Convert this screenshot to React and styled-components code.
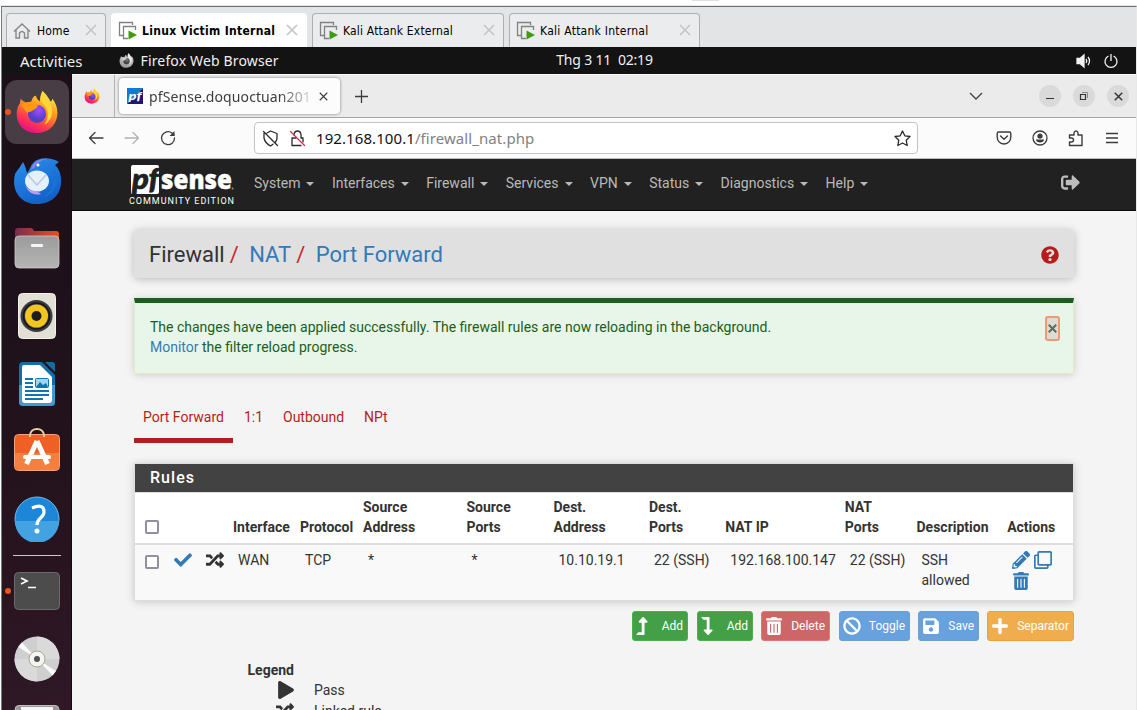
import React from "react";
import styled, { createGlobalStyle } from "styled-components";
import {
  FaCheck, FaRandom, FaPencilAlt, FaRegClone, FaTrashAlt, FaLevelUpAlt, FaLevelDownAlt,
  FaBan, FaSave, FaPlus, FaPlay, FaQuestionCircle, FaSignOutAlt,
} from "react-icons/fa";

const Global = createGlobalStyle`
  *, *::before, *::after { box-sizing: border-box; }
  html, body { margin: 0; padding: 0; overflow: hidden; background: #fff; }
  svg { display: block; flex: none; }
`;

const Screen = styled.div`
  width: 1137px;
  height: 710px;
  overflow: hidden;
  display: flex;
  flex-direction: column;
  background: #fff;
  font-family: Roboto, sans-serif;
`;
const HostStrip = styled.div`
  height: 6px;
  flex: none;
  padding-left: 692px;
  border-bottom: 1px solid #e6e6e6;
`;
const HostMark = styled.div`
  width: 27px;
  height: 1px;
  background: #e0e0e0;
`;
const VmWindow = styled.div`
  flex: 1;
  min-height: 0;
  display: flex;
  flex-direction: column;
  margin-left: 1px;
  border-left: 1px solid #777c7c;
  border-top: 1px solid #696d6d;
  border-right: 1px solid #e8e8e8;
`;
const VmTabs = styled.div`
  height: 40px;
  flex: none;
  display: flex;
  align-items: flex-end;
  gap: 5px;
  padding-left: 4px;
  background: #e3e4e6;
`;
const VmTab = styled.div`
  width: ${(p) => p.$w}px;
  height: 34px;
  display: flex;
  align-items: center;
  padding: 0 8px 0 ${(p) => p.$pl || 6}px;
  gap: ${(p) => p.$gap || 4}px;
  border: 1px solid ${(p) => (p.$active ? "#fff" : "#adafb1")};
  border-bottom: 0;
  border-radius: 4px 4px 0 0;
  background: ${(p) => (p.$active ? "#fff" : "#ebeced")};
  font: ${(p) => (p.$active ? 700 : 400)} 12px "DejaVu Sans Condensed", "DejaVu Sans", sans-serif;
  font-stretch: condensed;
  letter-spacing: ${(p) => p.$ls || 0}px;
  color: #000;
  white-space: nowrap;
`;
const VmClose = styled.div`
  margin-left: auto;
  padding-bottom: 2px;
`;

const GnomeBar = styled.div`
  height: 27px;
  flex: none;
  display: grid;
  grid-template-columns: 1fr auto 1fr;
  align-items: center;
  padding: 0 17px 0 18px;
  background: #131313;
  color: #f0f0f0;
  font: 400 14px "Noto Sans", sans-serif;
  white-space: pre;
`;
const GnomeGroup = styled.div`
  display: flex;
  align-items: center;
  justify-content: ${(p) => (p.$end ? "flex-end" : "flex-start")};
`;
const Label = styled.span`
  font-size: ${(p) => p.$size || 14}px;
  line-height: 20px;
  letter-spacing: ${(p) => p.$ls || 0}px;
  white-space: pre;
`;
const AppName = styled(Label)`
  margin-left: 7px;
`;
const Clock = styled(Label)`
  padding: 0 0 2px 70px;
`;
const AppIcon = styled.div`
  margin-left: 36px;
`;

const Desktop = styled.div`
  flex: 1;
  min-height: 0;
  display: flex;
`;
const Dock = styled.div`
  width: 70px;
  flex: none;
  overflow: hidden;
  background: linear-gradient(165deg, #1b0f18 0%, #21121c 55%, #28141f 75%, #301827 100%);
  border-right: 1px solid #120a10;
  padding-top: 6px;
`;
const DockItem = styled.div`
  position: relative;
  width: 64px;
  height: ${(p) => p.$h || 64}px;
  margin-left: 3px;
  margin-bottom: ${(p) => p.$mb || 4}px;
  border-radius: 12px;
  background: ${(p) => (p.$active ? "#483c45" : "transparent")};
  display: flex;
  align-items: center;
  justify-content: center;
`;
const RunDot = styled.div`
  position: absolute;
  left: 0;
  top: 29px;
  width: 6px;
  height: 6px;
  border-radius: 50%;
  background: #e95420;
`;
const DockLine = styled.div`
  width: 48px;
  height: 1px;
  margin: 0 0 3px 11px;
  background: #cbc6ca;
`;

const Browser = styled.div`
  flex: 1;
  min-width: 0;
  display: flex;
  flex-direction: column;
  background: #f4f4f4;
`;
const TabStrip = styled.div`
  height: 44px;
  flex: none;
  display: flex;
  border-top: 1px solid #fafafa;
  border-bottom: 1px solid #a4a4a4;
  background: #ebebeb;
`;
const PinnedTab = styled.div`
  width: 43px;
  display: flex;
  align-items: center;
  padding-left: 12px;
  border-right: 1px solid #b0b0b0;
`;
const PageTab = styled.div`
  width: 221px;
  height: 36px;
  margin: 3px 0 0 4px;
  display: flex;
  align-items: center;
  padding: 0 11px 0 8px;
  border-radius: 4px;
  background: #fcfcfc;
  box-shadow: 0 0 3px rgba(0, 0, 0, 0.5);
  font: 400 14px "Noto Sans", sans-serif;
  color: #3c3c3c;
`;
const PageTitle = styled.div`
  width: 167px;
  margin: 0 3px 0 6px;
  white-space: nowrap;
  letter-spacing: 0.1px;
  mask-image: linear-gradient(to right, #000 130px, transparent 167px);
`;
const NewTab = styled.div`
  display: flex;
  align-items: center;
  margin-left: 15px;
`;
const StripEnd = styled.div`
  margin-left: auto;
  display: flex;
  align-items: center;
  padding-right: 7px;
`;
const WinButton = styled.div`
  width: 22px;
  height: 22px;
  margin-left: 12px;
  border-radius: 50%;
  background: #dadada;
  display: flex;
  align-items: center;
  justify-content: center;
`;
const WinButtons = styled.div`
  display: flex;
  margin-left: 44px;
`;
const Toolbar = styled.div`
  height: 41px;
  flex: none;
  display: flex;
  align-items: center;
  border-bottom: 1px solid #bcbcbc;
  background: #fbfbfb;
  padding: 0 17px 0 16px;
`;
const NavIcons = styled.div`
  display: flex;
  gap: 20px;
  width: 166px;
`;
const UrlBar = styled.div`
  width: 664px;
  height: 32px;
  display: flex;
  align-items: center;
  padding: 0 6px 0 7px;
  border: 1px solid #c3c3c3;
  border-radius: 4px;
  background: #fff;
  font: 400 14px "Noto Sans", sans-serif;
  color: #111;
  gap: 10px;
`;
const UrlPath = styled.span`
  color: #818181;
`;
const UrlEnd = styled.div`
  margin-left: auto;
`;
const ToolEnd = styled.div`
  margin-left: auto;
  display: flex;
  align-items: center;
  gap: 19px;
`;

const NavBar = styled.div`
  height: 52px;
  flex: none;
  display: flex;
  border-bottom: 1px solid #080808;
  background: #212121;
  padding-left: 56px;
`;
const Menu = styled.div`
  display: flex;
  gap: 17.450px;
  margin: 14px 0 0 18px;
`;
const MenuItem = styled.div`
  display: flex;
  height: 20px;
  align-items: center;
  gap: 6px;
  font-size: 14px;
  line-height: 20px;
  color: #b9b9b9;
`;
const Caret = styled.i`
  margin-top: 2px;
  border: 4px solid transparent;
  border-top-color: #b9b9b9;
  border-bottom: 0;
`;
const Logout = styled.div`
  margin: 14px 56px 0 auto;
  color: #bdbdbd;
  font-size: 19px;
`;

const Content = styled.main`
  width: 940px;
  margin: 19px 0 0 62px;
  font-size: 14px;
  line-height: 20px;
  color: #333;
`;
const Crumbs = styled.div`
  height: 48px;
  display: flex;
  align-items: center;
  padding: 2px 15px 0;
  border-radius: 4px;
  background: #e0e0e0;
  box-shadow: 0 1px 8px rgba(0, 0, 0, 0.25);
  font-size: 22px;
  white-space: pre;
`;
const Crumb = styled.span`
  color: ${(p) => (p.$link ? "#337ab7" : "#333")};
`;
const Slash = styled.span`
  margin: 0 10.500px 0 5px;
  color: #c62828;
`;
const Help = styled.div`
  margin-left: auto;
  color: #b71c1c;
  font-size: 18px;
`;
const Alert = styled.div`
  height: 76px;
  margin-top: 20px;
  display: flex;
  justify-content: space-between;
  padding: 14px 13px 0 15px;
  border: 1px solid #dcedc8;
  border-top: 5px solid #1b5e20;
  background: #e8f5e9;
  box-shadow: 0 1px 8px rgba(0, 0, 0, 0.16);
  color: #1b5e20;
`;
const Link = styled.a`
  color: #337ab7;
`;
const Dismiss = styled.div`
  width: 15px;
  height: 25px;
  margin-top: -1px;
  display: flex;
  align-items: center;
  justify-content: center;
  border: 2px solid #ec9a78;
  border-radius: 3px;
  background: #dcdcd0;
`;
const Tabs = styled.div`
  display: flex;
  height: 47px;
  margin: 22px 0 20px;
  color: #b71c1c;
`;
const Tab = styled.div`
  padding: 11px 0 0 ${(p) => p.$pl || 10}px;
  width: ${(p) => p.$w}px;
  border-bottom: 5px solid ${(p) => (p.$active ? "#b71c1c" : "transparent")};
  white-space: nowrap;
`;
const Panel = styled.div`
  height: 138px;
  border: 1px solid #ddd;
  background: #fff;
  box-shadow: 0 1px 8px rgba(0, 0, 0, 0.18);
`;
const PanelTitle = styled.div`
  height: 28px;
  padding-left: 15px;
  background: #424242;
  color: #fff;
  font-size: 16px;
  font-weight: 500;
  line-height: 27px;
  letter-spacing: 1.05px;
`;
const Row = styled.div`
  display: grid;
  grid-template-columns: 34px 31.500px 27.500px 67px 63px 103.500px 87px 95.500px 76.300px 119.500px 71.700px 90.700px 70.800px;
  align-items: ${(p) => (p.$head ? "end" : "start")};
  height: ${(p) => (p.$head ? 53 : 55)}px;
  font-weight: ${(p) => (p.$head ? 700 : 400)};
  padding: ${(p) => (p.$head ? "0 0 6px" : "5px 0 0")};
  border-top: ${(p) => (p.$head ? "1px solid #ddd" : 0)};
  border-bottom: ${(p) => (p.$head ? "2px solid #ddd" : 0)};
  background: ${(p) => (p.$head ? "#fff" : "#f9f9f9")};
`;
const Cell = styled.div`
  padding-left: 10px;
  white-space: nowrap;
`;
const HeadCell = styled(Cell)`
  padding-left: 5px;
`;
const Check = styled.div`
  width: 14px;
  height: 14px;
  margin: ${(p) => (p.$head ? "0 0 3px" : "5px 0 0")};
  border: 2px solid #8f8f9d;
  border-radius: 2px;
  background: #fff;
`;
const RowIcon = styled.div`
  padding: 1px 0 0 5px;
  font-size: 18px;
  color: ${(p) => p.$c || "#333"};
`;
const Actions = styled.div`
  display: grid;
  grid-template-columns: 18px 18px;
  gap: 3px 4px;
  padding: 1px 0 0 9.500px;
  font-size: 18px;
  color: #337ab7;
`;
const Buttons = styled.div`
  display: flex;
  justify-content: flex-end;
  gap: 8px;
  margin-top: 10px;
`;
const Button = styled.div`
  width: ${(p) => p.$w}px;
  height: 30px;
  margin-left: ${(p) => p.$ml || 0}px;
  display: flex;
  align-items: center;
  justify-content: space-between;
  padding: 0 4px;
  border: 1px solid ${(p) => p.$b};
  border-radius: 3px;
  background: ${(p) => p.$bg};
  color: #fff;
  font-size: 12px;
`;
const BtnIcon = styled.div`
  margin-left: -1px;
  font-size: 18px;
`;
const ArrowIcon = styled(BtnIcon)`
  margin: 0 0 0 -4px;
`;
const Legend = styled.dl`
  margin: 19px 0 0 113.500px;
`;
const LegendTitle = styled.dt`
  font-weight: 700;
`;
const LegendRow = styled.dd`
  display: flex;
  height: 21px;
  margin: 0;
`;
const LegendIcon = styled.div`
  width: 66.500px;
  padding: 1px 0 0 ${(p) => p.$x}px;
  font-size: 18px;
`;

const stroke = { fill: "none", stroke: "currentColor", strokeLinecap: "round", strokeLinejoin: "round" };

const Cross = ({ s = 12, c = "#c3c4c6", w = 1.6 }) => (
  <svg width={s} height={s} viewBox="0 0 12 12"><path d="M1 1L11 11M11 1L1 11" stroke={c} strokeWidth={w} fill="none" /></svg>
);
const HomeIcon = () => (
  <svg width="18" height="18" viewBox="0 0 18 18" fill="none" stroke="#858788" strokeWidth="1.4">
    <path d="M1 9.5L9 2L17 9.5M3 8V16H6.5V11Q9 8 11.5 11V16H15V8" />
  </svg>
);
const VmIcon = () => (
  <svg width="20" height="19" viewBox="0 0 20 19" fill="none">
    <path d="M5 14.5H1.5V1.5H14.5V4" stroke="#808385" strokeWidth="1.3" />
    <path d="M10 17.5H5.5V5.5H17.5V9" stroke="#808385" strokeWidth="1.3" />
    <path d="M10.5 9.5V18.5L19 14Z" fill="#419b10" />
  </svg>
);

const Fox = ({ size, gray, id }) => (
  <svg width={size} height={size} viewBox="0 0 44 46">
    <defs>
      <linearGradient id={id + "a"} x1=".8" y1="0" x2=".3" y2="1">
        <stop offset="0" stopColor={gray ? "#eee" : "#fff44f"} />
        <stop offset=".4" stopColor={gray ? "#bbb" : "#ff9a1f"} />
        <stop offset=".75" stopColor={gray ? "#aaa" : "#ff3750"} />
        <stop offset="1" stopColor={gray ? "#999" : "#e50b8d"} />
      </linearGradient>
      <radialGradient id={id + "b"} cx=".6" cy=".3">
        <stop offset="0" stopColor={gray ? "#777" : "#a34cff"} />
        <stop offset="1" stopColor={gray ? "#444" : "#5540c4"} />
      </radialGradient>
    </defs>
    <path d="M28 1C31 4 35 9 36 12C38 12 38 9 38 9C45 18 45 29 39 37C31 47 13 48 5 38C-1 30 0 19 4 14L5 9C6 11 8 12 10 13L16 12C17 8 19 6 21 6C21 9 24 11 25 12C25 8 26 4 28 1Z" fill={`url(#${id}a)`} />
    <circle cx="22" cy="25" r="9.500" fill={`url(#${id}b)`} />
    <path d="M5 16C9 12 15 12 18 15L23 16C23 19 19 20 17 22C15 23 13 23 12 24L9 20Z" fill={gray ? "#ccc" : "#ff980e"} />
    <path d="M28 1C31 5 34 9 36 14C40 24 37 32 30 36C35 28 34 20 29 15C25 11 25 6 28 1Z" fill={gray ? "#eee" : "#ffd53a"} />
  </svg>
);
const Bird = () => (
  <svg width="48" height="46" viewBox="0 0 48 46">
    <defs>
      <linearGradient id="bird" x1="0" y1="0" x2=".5" y2="1"><stop offset="0" stopColor="#2c91f0" /><stop offset="1" stopColor="#1261c9" /></linearGradient>
    </defs>
    <path d="M10 4C8 8 5 11 2 16C-2 32 7 46 24 46C39 46 48 36 48 24C48 15 46 11 42 7L46 4C38-1 25-1 20 5C17 8 17 12 14 15C13 11 12 7 10 4Z" fill="url(#bird)" />
    <path d="M18 12C20 3 28 0 35 1C28 1 24 6 22 9Z" fill="#8a83e4" />
    <ellipse cx="24" cy="23" rx="12" ry="10.5" fill="#e5f0fa" />
    <path d="M15 17L24 27L33 17" fill="none" stroke="#b8cbdc" strokeWidth="1.6" />
    <path d="M14 30C19 34 24 32 28 36C20 38 15 34 12 27Z" fill="#bf9cf0" />
    <circle cx="25" cy="7" r="1.5" fill="#fff" />
    <path d="M39 12C43 22 40 32 31 39C43 36 46 22 42 13Z" fill="#1972d8" />
  </svg>
);
const Folder = () => (
  <svg width="46" height="42" viewBox="0 0 46 42">
    <defs>
      <linearGradient id="fb"><stop offset="0" stopColor="#7b2a50" /><stop offset="1" stopColor="#e4531f" /></linearGradient>
      <linearGradient id="ff" x1="0" y1="0" x2="0" y2="1"><stop offset="0" stopColor="#9b9b9b" /><stop offset="1" stopColor="#b5b5b5" /></linearGradient>
    </defs>
    <path d="M1 4Q1 1 4 1H17Q19 1 20 4H42Q45 4 45 7V20H1Z" fill="url(#fb)" />
    <rect x="1" y="9" width="44" height="32" rx="4" fill="url(#ff)" stroke="#ccc" strokeWidth=".8" />
    <rect x="17" y="17" width="12" height="3" rx="1" fill="#f6f6f6" />
  </svg>
);
const Speaker = () => (
  <svg width="38" height="46" viewBox="0 0 38 46">
    <rect x=".5" y=".5" width="37" height="45" rx="4" fill="#e2dfd4" stroke="#f3f1ea" />
    <circle cx="18.5" cy="23" r="16" fill="#3b3b42" />
    <circle cx="18.5" cy="23" r="13" fill="none" stroke="#15161b" strokeWidth="1.5" />
    <circle cx="18.5" cy="23" r="11.5" fill="#f5c51f" />
    <circle cx="18.5" cy="23" r="5" fill="#1e1e1e" />
  </svg>
);
const Writer = () => (
  <svg width="38" height="46" viewBox="0 0 38 46">
    <path d="M1 5Q1 1 5 1H24L37 14V41Q37 45 33 45H5Q1 45 1 41Z" fill="#0f6faa" />
    <path d="M1 24H37V41Q37 45 33 45H5Q1 45 1 41Z" fill="#3c9bd1" />
    <path d="M27 1H34Q37 1 37 4V11Z" fill="#126da5" />
    <path d="M4 6Q4 4 6 4H22L34 16V39Q34 42 31 42H7Q4 42 4 39Z" fill="#fff" />
    <path d="M7 18H15M7 22H15M7 26H15M7 30H31M7 34H31M7 38H25" stroke="#0e74b5" strokeWidth="1.8" />
    <rect x="17.5" y="17.5" width="13" height="9" rx="1" fill="#a4d4f3" stroke="#0e74b5" />
    <path d="M18 26L22 21L25 24L28 22L30 26Z" fill="#0e74b5" />
  </svg>
);
const Bag = () => (
  <svg width="46" height="43" viewBox="0 0 46 43">
    <rect x=".5" y="6.500" width="45" height="36" rx="4" fill="#ee6026" stroke="#f7a27c" />
    <path d="M1 25H45V38Q45 42 41 42H5Q1 42 1 38Z" fill="#f4803f" />
    <path d="M16 9V7Q17 1 23 1Q29 1 30 7V9" fill="none" stroke="#e6cf9f" strokeWidth="1.8" />
    <path d="M23 13L12.500 36M23 13L33.500 36" stroke="#fff" strokeWidth="5" fill="none" />
    <path d="M11 29H35" stroke="#fff" strokeWidth="4" strokeLinecap="round" />
  </svg>
);
const HelpDisc = () => (
  <svg width="46" height="46" viewBox="0 0 46 46">
    <circle cx="23" cy="23" r="22" fill="#1c86d8" stroke="#6dbcf0" />
    <path d="M1 25H45A22 22 0 0 1 1 25Z" fill="#43a2e2" />
    <path d="M18 12Q30 7 30 16Q30 19 26.500 22Q23 25 23 29" fill="none" stroke="#fff" strokeWidth="3.200" />
    <circle cx="23" cy="35" r="2.500" fill="#fff" />
  </svg>
);
const Terminal = () => (
  <svg width="46" height="38" viewBox="0 0 46 38">
    <rect x=".5" y=".5" width="45" height="37" rx="4" fill="#4c4c4c" stroke="#6b6b6b" />
    <path d="M7 6L13 9L7 12M14 15.500H22" fill="none" stroke="#fff" strokeWidth="1.700" />
  </svg>
);
const Disc = () => (
  <svg width="46" height="46" viewBox="0 0 46 46">
    <circle cx="23" cy="23" r="22.500" fill="#cfcfcf" />
    <path d="M23 23V.5A22.500 22.500 0 0 1 45.500 23Z M23 23V45.500A22.500 22.500 0 0 1 .5 23Z" fill="#dadada" />
    <path d="M23 23L4.500 11L8 6.500ZM23 23L42 35L38.500 39.500Z" fill="#fafafa" />
    <circle cx="23" cy="23" r="8" fill="#f4f4f0" stroke="#aaa692" />
    <circle cx="23" cy="23" r="3" fill="#505050" />
  </svg>
);
const Drive = () => (
  <svg width="46" height="30" viewBox="0 0 46 30">
    <rect x="1" y=".5" width="44" height="29" rx="4" fill="#989898" stroke="#c0c0c0" />
    <rect x="7" y="2" width="32" height="26" fill="#f5f5f5" />
  </svg>
);
const PfFavicon = () => (
  <svg width="16" height="16" viewBox="0 0 16 16">
    <path d="M0 0H16L0 16Z" fill="#1479d2" /><path d="M16 0V16H0Z" fill="#1d1475" />
    <text x="1.500" y="12" fontFamily="Lato, sans-serif" fontWeight="900" fontStyle="italic" fontSize="12" fill="#fff" textLength="13" lengthAdjust="spacingAndGlyphs">pf</text>
  </svg>
);
const PfLogo = () => (
  <svg width="108" height="51" viewBox="0 0 108 51">
    <path d="M5 6H29Q31 6 31 8V33Q31 35 29 35H3V8Q3 6 5 6Z" fill="#fff" />
    <text x="4" y="29.500" fontFamily="Lato, sans-serif" fontWeight="900" fontStyle="italic" fontSize="29" fill="#212121" stroke="#212121" strokeWidth=".7" textLength="27" lengthAdjust="spacingAndGlyphs">pf</text>
    <text x="33" y="30" fontFamily="Open Sans, sans-serif" fontWeight="800" fontSize="26" fill="#fff" stroke="#fff" strokeWidth=".4" textLength="71" lengthAdjust="spacingAndGlyphs">sense</text>
    <circle cx="104.500" cy="29.500" r="1" fill="#999" />
    <text x="1" y="45" fontFamily="Roboto, sans-serif" fontSize="9" fill="#fff" textLength="105">COMMUNITY EDITION</text>
  </svg>
);

const menus = ["System", "Interfaces", "Firewall", "Services", "VPN", "Status", "Diagnostics", "Help"];
const heads = [
  "Interface", "Protocol", <>Source<br />Address</>, <>Source<br />Ports</>, <>Dest.<br />Address</>,
  <>Dest.<br />Ports</>, "NAT IP", <>NAT<br />Ports</>, "Description", "Actions",
];
const values = ["WAN", "TCP", "*", "*", "10.10.19.1", "22 (SSH)", "192.168.100.147", "22 (SSH)", <>SSH<br />allowed</>];
const green = { $bg: "#43a047", $b: "#4caf50" };
const blue = { $bg: "#67a1de", $b: "#6d9fd0" };
const buttons = [
  ["Add", { ...green, $w: 56 }, FaLevelUpAlt, ArrowIcon],
  ["Add", { ...green, $w: 56, $ml: 1 }, FaLevelDownAlt, ArrowIcon],
  ["Delete", { $bg: "#cd6767", $b: "#e07878", $w: 69 }, FaTrashAlt, BtnIcon],
  ["Toggle", { ...blue, $w: 71, $ml: 1 }, FaBan, BtnIcon],
  ["Save", { ...blue, $w: 61 }, FaSave, BtnIcon],
  ["Separator", { $bg: "#f0ad4e", $b: "#eea236", $w: 87 }, FaPlus, BtnIcon],
];

export default function App() {
  return (
    <Screen>
      <Global />
      <HostStrip><HostMark /></HostStrip>
      <VmWindow>
        <VmTabs>
          <VmTab $w={100} $pl={6} $gap={6} $ls={0.15}><HomeIcon /><span>Home</span><VmClose><Cross /></VmClose></VmTab>
          <VmTab $w={196} $ls={0.3} $active><VmIcon /><span>Linux Victim Internal</span><VmClose><Cross /></VmClose></VmTab>
          <VmTab $w={192} $ls={0.18}><VmIcon /><span>Kali Attank External</span><VmClose><Cross /></VmClose></VmTab>
          <VmTab $w={191} $ls={0.26}><VmIcon /><span>Kali Attank Internal</span><VmClose><Cross /></VmClose></VmTab>
        </VmTabs>
        <GnomeBar>
          <GnomeGroup>
            <Label $size={15}>Activities</Label>
            <AppIcon><Fox size={15} gray id="g" /></AppIcon>
            <AppName $ls={0.15}>Firefox Web Browser</AppName>
          </GnomeGroup>
          <Clock $ls={-0.2}>Thg 3 11  02:19</Clock>
          <GnomeGroup $end>
            <svg width="43" height="16" viewBox="0 0 43 16" fill="none" stroke="#f2f2f2" strokeWidth="1.300">
              <path d="M1 5.500H4L8 2V14L4 10.500H1Z" fill="#f2f2f2" />
              <path d="M10 6Q11.500 8 10 10M12 4Q15 8 12 12" />
              <path d="M32.500 3A6 6 0 1 0 37.500 3M35 1V8" />
            </svg>
          </GnomeGroup>
        </GnomeBar>
        <Desktop>
          <Dock>
            <DockItem $active $mb={5}><RunDot /><Fox size={44} id="d" /></DockItem>
            <DockItem $mb={3}><Bird /></DockItem>
            <DockItem><Folder /></DockItem>
            <DockItem><Speaker /></DockItem>
            <DockItem $mb={1}><Writer /></DockItem>
            <DockItem $mb={5}><Bag /></DockItem>
            <DockItem $h={66} $mb={3}><HelpDisc /></DockItem>
            <DockLine />
            <DockItem $mb={3}><RunDot /><Terminal /></DockItem>
            <DockItem $h={66} $mb={13}><Disc /></DockItem>
            <DockItem $h={30}><Drive /></DockItem>
          </Dock>
          <Browser>
            <TabStrip>
              <PinnedTab><Fox size={16} id="p" /></PinnedTab>
              <PageTab>
                <PfFavicon />
                <PageTitle>pfSense.doquoctuan201</PageTitle>
                <Cross s={9} c="#3c3c3c" w={1.5} />
              </PageTab>
              <NewTab><svg width="13" height="13"><path d="M6.500 0V13M0 6.500H13" stroke="#3c3c3c" strokeWidth="1.300" /></svg></NewTab>
              <StripEnd>
                <svg width="14" height="8"><path d="M1 1L7 7L13 1" fill="none" stroke="#444" strokeWidth="1.400" /></svg>
                <WinButtons>
                  <WinButton><svg width="10" height="10"><path d="M1 7.500H9" stroke="#333" /></svg></WinButton>
                  <WinButton><svg width="10" height="10" fill="none" stroke="#333"><path d="M1.500 3.500H6.500V8.500H1.500Z" strokeWidth="1.200" /><path d="M3 1.500H8.500V7" stroke="#888" /></svg></WinButton>
                  <WinButton><Cross s={9} c="#333" w={1.9} /></WinButton>
                </WinButtons>
              </StripEnd>
            </TabStrip>
            <Toolbar>
              <NavIcons>
                <svg width="16" height="16" {...stroke} stroke="#3c3c3c" strokeWidth="1.300"><path d="M15 8H1.500M7 2.500L1.500 8L7 13.500" /></svg>
                <svg width="16" height="16" {...stroke} stroke="#b3b3b3" strokeWidth="1.300"><path d="M1 8H14.500M9 2.500L14.500 8L9 13.500" /></svg>
                <svg width="16" height="16" {...stroke} stroke="#3c3c3c" strokeWidth="1.300"><path d="M14.500 8A6.500 6.500 0 1 1 12 3L14 5" /><path d="M14.500 1V6H9.500Z" fill="#3c3c3c" stroke="none" /></svg>
              </NavIcons>
              <UrlBar>
                <svg width="17" height="17" {...stroke} stroke="#2b2b2b" strokeWidth="1.300"><path d="M5 3L8.500 1L15 3.500V8Q15 10 13.500 12M2 3.500V8Q3 13 8.500 16Q10 15 11 14.200M1.500 1.500L15.500 15.500" /></svg>
                <svg width="17" height="17" {...stroke} stroke="#2b2b2b" strokeWidth="1.300"><path d="M5 5V4.500Q5.500 1 8.500 1Q11.500 1 12 4.500V8H14V12M7 8H3V15.500H12" /><path d="M1.500 1.500L15.500 15.500" stroke="#e22850" /></svg>
                <Label $size={15} $ls={0.08}>192.168.100.1<UrlPath>/firewall_nat.php</UrlPath></Label>
                <UrlEnd>
                  <svg width="17" height="17" {...stroke} stroke="#2b2b2b" strokeWidth="1.300"><path d="M8.500 1L10.800 5.800L16 6.500L12.200 10.200L13.200 15.500L8.500 13L3.800 15.500L4.800 10.200L1 6.500L6.200 5.800Z" /></svg>
                </UrlEnd>
              </UrlBar>
              <ToolEnd>
                <svg width="16" height="16" {...stroke} stroke="#3c3c3c" strokeWidth="1.400"><path d="M2.500 2H13.500Q14.800 2 14.800 3.500V7Q14.500 13.500 8 14Q1.500 13.500 1.200 7V3.500Q1.200 2 2.500 2ZM4.500 6L8 9.200L11.500 6" /></svg>
                <svg width="18" height="16" viewBox="-1 0 18 16" fill="none"><circle cx="8" cy="8" r="7" stroke="#3c3c3c" strokeWidth="1.300" /><circle cx="8" cy="6" r="2.600" fill="#3c3c3c" /><path d="M3.800 9.500H12.200Q11.500 12.500 8 12.500Q4.500 12.500 3.800 9.500Z" fill="#3c3c3c" /></svg>
                <svg width="18" height="17" {...stroke} stroke="#3c3c3c" strokeWidth="1.400"><path d="M1.500 15.500V12H3.500A2 2 0 0 0 3.500 8H1.500V5H6V3Q6.200 1 8 1Q9.800 1 10 3V5H14V15.500Z" /></svg>
                <svg width="14" height="14" stroke="#3c3c3c" strokeWidth="1.300"><path d="M1 2.500H13M1 7H13M1 11.500H13" /></svg>
              </ToolEnd>
            </Toolbar>
            <NavBar>
              <PfLogo />
              <Menu>
                {menus.map((m) => <MenuItem key={m}>{m}<Caret /></MenuItem>)}
              </Menu>
              <Logout><FaSignOutAlt /></Logout>
            </NavBar>
            <Content>
              <Crumbs>
                <Crumb>Firewall</Crumb><Slash>/</Slash>
                <Crumb $link>NAT</Crumb><Slash>/</Slash>
                <Crumb $link>Port Forward</Crumb>
                <Help><FaQuestionCircle /></Help>
              </Crumbs>
              <Alert>
                <div>
                  The changes have been applied successfully. The firewall rules are now reloading in the background.<br />
                  <Link>Monitor</Link> the filter reload progress.
                </div>
                <Dismiss><Cross s={9} c="#5a6b60" w={2.600} /></Dismiss>
              </Alert>
              <Tabs>
                <Tab $w={99} $pl={9} $active>Port Forward</Tab>
                <Tab $w={40} $pl={11}>1:1</Tab>
                <Tab $w={81}>Outbound</Tab>
                <Tab $w={50}>NPt</Tab>
              </Tabs>
              <Panel>
                <PanelTitle>Rules</PanelTitle>
                <Row $head>
                  <Cell><Check $head /></Cell><span /><span />
                  {heads.map((h, i) => <HeadCell key={i}>{h}</HeadCell>)}
                </Row>
                <Row>
                  <Cell><Check /></Cell>
                  <RowIcon $c="#337ab7"><FaCheck /></RowIcon>
                  <RowIcon><FaRandom /></RowIcon>
                  {values.map((v, i) => <Cell key={i}>{v}</Cell>)}
                  <Actions><FaPencilAlt /><FaRegClone /><FaTrashAlt /></Actions>
                </Row>
              </Panel>
              <Buttons>
                {buttons.map(([text, look, Icon, Slot], i) => (
                  <Button key={i} {...look}><Slot><Icon /></Slot>{text}</Button>
                ))}
              </Buttons>
              <Legend>
                <LegendTitle>Legend</LegendTitle>
                <LegendRow><LegendIcon $x={29}><FaPlay /></LegendIcon>Pass</LegendRow>
                <LegendRow><LegendIcon $x={28}><FaRandom /></LegendIcon>Linked rule</LegendRow>
              </Legend>
            </Content>
          </Browser>
        </Desktop>
      </VmWindow>
    </Screen>
  );
}
